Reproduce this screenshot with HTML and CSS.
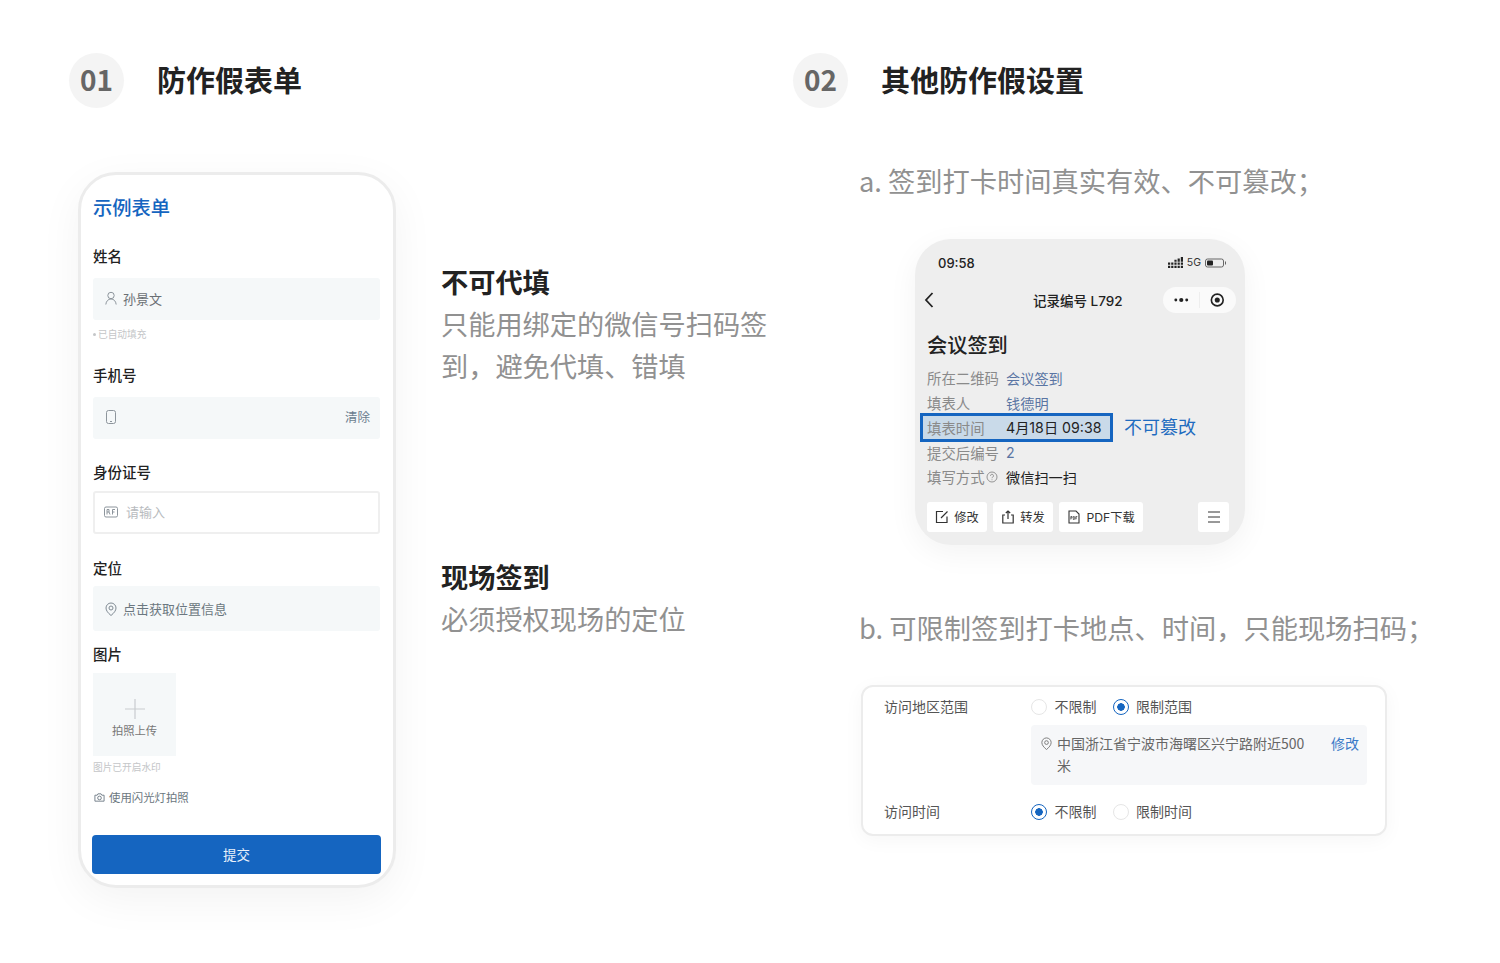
FILE: index.html
```html
<!DOCTYPE html>
<html lang="zh-CN">
<head>
<meta charset="utf-8">
<title>防作假</title>
<link rel="stylesheet" href="styles.css">
</head>
<body>
<main class="page">
  <section class="col-left">
    <header class="head"><span class="num">01</span><h1 class="head-title">防作假表单</h1></header>
    <div class="left-body">
      <div class="phone">
        <div class="form-title">示例表单</div>
        <div class="label l1">姓名</div>
        <div class="field fill h42 m12">
          <svg class="ic" viewBox="0 0 14 14" fill="none" stroke="#8d959c" stroke-width="1"><circle cx="7" cy="4.500" r="3.200"/><path d="M1.800 13.500c.4-3.400 2.400-5.500 5.200-5.500s4.800 2.100 5.200 5.500"/></svg>
          <span class="val">孙景文</span>
        </div>
        <div class="hint h1"><i class="bullet"></i>已自动填充</div>
        <div class="label l2">手机号</div>
        <div class="field fill h42 m12">
          <svg class="ic" viewBox="0 0 14 14" fill="none" stroke="#8d959c" stroke-width="1"><rect x="2.500" y="0.500" width="9" height="13" rx="2"/><path d="M6 11.500h2"/></svg>
          <span class="clear">清除</span>
        </div>
        <div class="label l3">身份证号</div>
        <div class="field outline h43 m9">
          <svg class="ic" viewBox="0 0 14 14" fill="none" stroke="#8d959c" stroke-width="1"><rect x="0.500" y="2" width="13" height="10" rx="1.500"/><path d="M3 9.500v-5h2v2.500H3m2 0 1 2.500M8.500 9.500v-5h2.500M8.500 7h2"/></svg>
          <span class="placeholder">请输入</span>
        </div>
        <div class="label l4">定位</div>
        <div class="field fill h45 m8 loc">
          <svg class="ic" viewBox="0 0 14 14" fill="none" stroke="#7f8a93" stroke-width="1"><path d="M7 13.500C4 11 2 8.500 2 6a5 5 0 0 1 10 0c0 2.500-2 5-5 7.500z"/><circle cx="7" cy="6" r="2"/></svg>
          <span class="val val-loc">点击获取位置信息</span>
        </div>
        <div class="label l5">图片</div>
        <div class="tile">
          <svg class="plus" viewBox="0 0 20 20" fill="none" stroke="#c9cccf" stroke-width="1.200"><path d="M10 0v20M0 10h20"/></svg>
          <span class="tile-text">拍照上传</span>
        </div>
        <div class="hint h2">图片已开启水印</div>
        <div class="flash">
          <svg class="ic-s" viewBox="0 0 12 12" fill="none" stroke="#6f7b85" stroke-width="1"><path d="M1 3.500h2.500L4.300 2h3.400l.8 1.500H11V10H1z"/><circle cx="6" cy="6.500" r="2"/></svg>
          <span>使用闪光灯拍照</span>
        </div>
        <div class="submit">提交</div>
      </div>
      <div class="notes">
        <h2 class="note-title">不可代填</h2>
        <p class="note-text">只能用绑定的微信号扫码签到，避免代填、错填</p>
        <h2 class="note-title second">现场签到</h2>
        <p class="note-text">必须授权现场的定位</p>
      </div>
    </div>
  </section>

  <section class="col-right">
    <header class="head"><span class="num">02</span><h1 class="head-title">其他防作假设置</h1></header>
    <div class="right-body">
      <p class="point pa">a. 签到打卡时间真实有效、不可篡改；</p>
      <div class="mini">
        <div class="status">
          <span class="time">09:58</span>
          <span class="status-right">
            <svg class="signal" viewBox="0 0 15 11" fill="#222"><path d="M0 5.500h2.200v2.200H0zM3.200 5.500h2.200v2.200H3.200zM6.400 5.500h2.200v2.200H6.400zM9.600 5.500h2.200v2.200H9.600zM12.800 5.500H15v2.200h-2.200zM0 8.800h2.200V11H0zM3.200 8.800h2.200V11H3.200zM6.400 8.800h2.200V11H6.400zM9.600 8.800h2.200V11H9.600zM12.800 8.800H15V11h-2.200zM6.400 2.800h2.200v2H6.400zM9.600 1.500h2.200v3.300H9.600zM12.800 0H15v4.800h-2.200z"/></svg>
            <span class="net">5G</span>
            <svg class="batt" viewBox="0 0 22 10" fill="none"><rect x="0.500" y="1" width="18" height="8" rx="2" stroke="#666"/><rect x="2" y="2.500" width="6" height="5" rx="1" fill="#222"/><path d="M20.500 3.500v3" stroke="#666"/></svg>
          </span>
        </div>
        <div class="nav">
          <svg class="back" viewBox="0 0 10 16" fill="none" stroke="#222" stroke-width="1.800"><path d="M8.500 1 2 8l6.500 7"/></svg>
          <span class="nav-title">记录编号 L792</span>
          <span class="capsule">
            <svg class="dots" viewBox="0 0 16 6" fill="#222"><circle cx="2" cy="3" r="1.600"/><circle cx="8" cy="3" r="2.300"/><circle cx="14" cy="3" r="1.600"/></svg>
            <i class="sep"></i>
            <svg class="target" viewBox="0 0 16 16" fill="none"><circle cx="8" cy="8" r="6.500" stroke="#222" stroke-width="1.800"/><circle cx="8" cy="8" r="2.800" fill="#222"/></svg>
          </span>
        </div>
        <div class="mini-title">会议签到</div>
        <div class="rows">
          <div class="row"><span class="k">所在二维码</span><span class="v link">会议签到</span></div>
          <div class="row"><span class="k">填表人</span><span class="v link">钱德明</span></div>
          <div class="row hl-row">
            <div class="hl"><span class="k">填表时间</span><span class="v">4月18日 09:38</span></div>
            <span class="locked">不可篡改</span>
          </div>
          <div class="row"><span class="k">提交后编号</span><span class="v link">2</span></div>
          <div class="row"><span class="k k-help">填写方式<svg class="help" viewBox="0 0 12 12" fill="none" stroke="#8a8a8a" stroke-width="0.900"><circle cx="6" cy="6" r="5"/><path d="M4.500 4.800a1.500 1.500 0 1 1 2.200 1.300c-.5.300-.7.500-.7 1.100M6 8.400v.8"/></svg></span><span class="v">微信扫一扫</span></div>
        </div>
        <div class="actions">
          <span class="act a1"><svg class="act-ic" viewBox="0 0 14 14" fill="none" stroke="#333" stroke-width="1.200"><path d="M8 1.500H1.500v11H12V6.500M6 8l6.500-6.500"/></svg>修改</span>
          <span class="act a2"><svg class="act-ic" viewBox="0 0 14 14" fill="none" stroke="#333" stroke-width="1.200"><path d="M4 5H1.800v8h10.400V5H10M7 9V1M4.800 3 7 1l2.200 2"/></svg>转发</span>
          <span class="act a3"><svg class="act-ic" viewBox="0 0 14 14" fill="none" stroke="#333" stroke-width="1.100"><path d="M2 1h7l3 3v9H2z"/><path d="M3.800 9.500v-3H5v1.500H3.800M6.300 9.500v-3h1l.6 1.500-.6 1.500zM8.800 9.500v-3h1.500M8.800 8h1.200" stroke-width="0.700"/></svg>PDF下载</span>
          <span class="act-menu"><svg class="menu" viewBox="0 0 12 12" fill="none" stroke="#333" stroke-width="1"><path d="M0 1h12M0 6h12M0 11h12"/></svg></span>
        </div>
      </div>
      <p class="point pb">b. 可限制签到打卡地点、时间，只能现场扫码；</p>
      <div class="card">
        <div class="c-row">
          <span class="c-label">访问地区范围</span>
          <span class="radios">
            <span class="radio"><i class="dot"></i>不限制</span>
            <span class="radio"><i class="dot on"></i>限制范围</span>
          </span>
        </div>
        <div class="addr">
          <svg class="pin" viewBox="0 0 14 14" fill="none" stroke="#777" stroke-width="1"><path d="M7 13.500C4 11 2 8.500 2 6a5 5 0 0 1 10 0c0 2.500-2 5-5 7.500z"/><circle cx="7" cy="6" r="2"/></svg>
          <span class="addr-text">中国浙江省宁波市海曙区兴宁路附近500米</span>
          <span class="addr-edit">修改</span>
        </div>
        <div class="c-row c-row-2">
          <span class="c-label">访问时间</span>
          <span class="radios">
            <span class="radio"><i class="dot on"></i>不限制</span>
            <span class="radio"><i class="dot"></i>限制时间</span>
          </span>
        </div>
      </div>
    </div>
  </section>
</main>
</body>
</html>
```

FILE: styles.css
```css
* { box-sizing: border-box; }
html, body { margin: 0; padding: 0; background: #fff; }
body {
  width: 1500px;
  height: 963px;
  overflow: hidden;
  font-family: "Noto Sans CJK SC", "Noto Sans", sans-serif;
  color: #222;
}
h1, h2, p { margin: 0; font: inherit; }
.page { display: flex; padding: 53px 0 0 69px; }
.col-left { width: 724px; flex: none; }
.col-right { flex: 1; }

.head { display: flex; align-items: center; height: 55px; }
.num {
  width: 55px; height: 55px; flex: none; border-radius: 50%;
  background: #f4f4f4; color: #666; padding-bottom: 4px;
  display: flex; align-items: center; justify-content: center;
  font-size: 28px; font-weight: 700;
}
.head-title { margin: 0 0 4px 33px; font-size: 29px; line-height: 40px; font-weight: 700; color: #222; }

.left-body { display: flex; margin: 64px 0 0 9px; }
.phone {
  width: 318px; height: 716px; flex: none;
  border: 3px solid #ececec; border-radius: 38px;
  padding: 18px 12px 0;
  background: #fff;
  box-shadow: 0 12px 44px rgba(0, 0, 0, .05);
}
.form-title { font-size: 19.300px; line-height: 28px; font-weight: 500; color: #1565c0; }
.label { font-size: 14.500px; line-height: 20px; font-weight: 500; color: #222; }
.l1 { margin-top: 25px; }
.l2 { margin-top: 24px; }
.l3 { margin-top: 23px; }
.l4 { margin-top: 24px; }
.l5 { margin-top: 13px; }
.field { display: flex; align-items: center; width: 287px; padding: 0 10px 2px 11px; border-radius: 3px; font-size: 13px; }
.fill { background: #f5f8f9; }
.outline { background: #fff; border: 2px solid #efefef; padding-left: 9px; }
.loc { padding-bottom: 0; }
.h42 { height: 42px; }
.h43 { height: 43px; }
.h45 { height: 45px; }
.m12 { margin-top: 12px; }
.m9 { margin-top: 9px; }
.m8 { margin-top: 8px; }
.ic { width: 14px; height: 14px; flex: none; }
.val { margin-left: 5px; color: #6a6f74; }
.val-loc { color: #6b7780; }
.clear { margin: 0 0 2px auto; font-size: 12.500px; color: #6b7d8f; }
.placeholder { margin-left: 8px; color: #b8bbbe; }
.hint { display: flex; align-items: center; font-size: 9.700px; line-height: 14px; color: #c4c6c8; }
.bullet { width: 3px; height: 3px; margin-right: 2px; border-radius: 50%; background: #c4c6c8; }
.h1 { margin-top: 7px; }
.h2 { margin-top: 4px; }
.tile {
  width: 83px; height: 83px; margin-top: 9px; background: #f5f8f9;
  display: flex; flex-direction: column; align-items: center; padding-top: 26px;
}
.plus { width: 20px; height: 20px; }
.tile-text { margin-top: 3px; font-size: 11.300px; line-height: 16px; color: #777; }
.flash { display: flex; align-items: center; margin-top: 15px; font-size: 11.400px; line-height: 16px; color: #6b7780; }
.ic-s { width: 11px; height: 11px; margin-right: 4px; margin-left: 1px; }
.submit {
  width: 289px; height: 39px; margin: 30px 0 0 -1px; padding-bottom: 2px;
  background: #1565c0; border-radius: 4px; color: #e8f0fa;
  display: flex; align-items: center; justify-content: center; font-size: 13.500px;
}

.notes { width: 330px; margin-left: 45px; padding-top: 88px; flex: none; }
.note-title { font-size: 27.200px; line-height: 42px; font-weight: 700; color: #222; }
.note-text { font-size: 27.200px; line-height: 42px; color: #919191; }
.second { margin-top: 169px; }

.right-body { margin-top: 52px; padding-left: 67px; }
.point { margin-left: -1px; font-size: 27.250px; line-height: 40px; color: #919191; white-space: nowrap; }
.pb { margin-top: 62px; }

.mini {
  width: 330px; height: 306px; margin: 39px 0 0 55px;
  background: #eeeeee; border-radius: 36px; padding: 14px 8px 0 12px;
  box-shadow: 0 8px 30px rgba(0, 0, 0, .05);
  font-family: Inter, "Noto Sans CJK SC", sans-serif;
}
.status { display: flex; align-items: center; justify-content: space-between; height: 20px; padding: 0 10px 1px 11px; }
.time { font-size: 13px; font-weight: 500; color: #222; }
.status-right { display: flex; align-items: center; }
.signal { width: 15px; height: 11px; }
.net { margin: 0 4px; font-size: 10.500px; color: #333; }
.batt { width: 22px; height: 10px; }
.nav { display: flex; align-items: center; position: relative; height: 26px; margin-top: 14px; }
.back { width: 10px; height: 16px; margin-left: -3px; }
.nav-title { margin: 0 0 1px 99px; font-size: 13.500px; font-weight: 500; color: #222; }
.capsule {
  margin-left: auto; margin-right: 1px; width: 73px; height: 26px; border-radius: 13px; background: #fafafa;
  display: flex; align-items: center; padding: 0 11px;
}
.dots { width: 16px; height: 6px; }
.sep { width: 1px; height: 16px; margin: 0 10px; background: #eee; }
.target { width: 16px; height: 16px; margin-left: 1px; }
.mini-title { margin-top: 18px; font-size: 20.200px; line-height: 30px; font-weight: 500; color: #222; }
.rows { margin-top: 4.500px; }
.row { display: flex; align-items: center; height: 24.750px; font-size: 14.400px; }
.k { width: 79px; flex: none; color: #8a8a8a; display: flex; align-items: center; white-space: nowrap; }
.v { color: #222; white-space: nowrap; font-size: 14.200px; }
.link { color: #5a75a3; }
.hl-row { position: relative; }
.hl {
  display: flex; align-items: center;
  width: 193px; height: 29px; margin-left: -7px; padding-left: 4px; flex: none;
  border: 3px solid #1565c0; background: #c9dae9;
}
.locked { margin: 0 0 2px 11px; font-size: 18px; color: #1f6cc0; }
.help { width: 12px; height: 12px; margin-left: 1px; }
.actions { display: flex; margin-top: 13px; }
.act {
  display: flex; align-items: center; justify-content: center;
  height: 30px; padding-bottom: 1px; background: #fff; border-radius: 3px; font-size: 12.200px; color: #333;
}
.a1, .a2 { width: 60px; margin-right: 6px; }
.a3 { width: 84px; }
.act-ic { width: 14px; height: 14px; margin-right: 5px; }
.act-menu {
  width: 31px; height: 30px; margin-left: auto; margin-right: 8px; background: #fff; border-radius: 3px;
  display: flex; align-items: center; justify-content: center;
}
.menu { width: 12px; height: 12px; }

.card {
  width: 526px; height: 151px; margin: 38px 0 0 1px;
  border: 2px solid #ececec; border-radius: 12px; background: #fff;
  padding: 8px 19px 0 21px;
  box-shadow: 0 4px 20px rgba(0, 0, 0, .04);
}
.c-row { display: flex; align-items: center; height: 24px; padding-bottom: 2px; font-size: 14px; color: #555; }
.c-row-2 { margin-top: 15px; }
.c-label { width: 147px; flex: none; }
.radios { display: flex; }
.radio { display: flex; align-items: center; margin-right: 16px; }
.dot {
  width: 16px; height: 16px; margin: 2px 7.500px 0 0; border-radius: 50%;
  border: 1.500px solid #e6e6e6; background: #fff; flex: none;
}
.on { border-color: #1565c0; background: radial-gradient(circle, #1565c0 0, #1565c0 3.500px, #fff 4px); }
.addr {
  display: flex; align-items: flex-start;
  width: 336px; height: 60px; margin: 6px 0 0 147px; padding: 7px 8px 0 9px;
  background: #f6f7f9; border-radius: 4px; font-size: 14px; line-height: 22px; color: #666;
}
.pin { width: 13px; height: 13px; flex: none; margin: 5px 4px 0 0; }
.addr-text { width: 250px; flex: none; }
.addr-edit { margin-left: auto; color: #3a7bc8; }
```
